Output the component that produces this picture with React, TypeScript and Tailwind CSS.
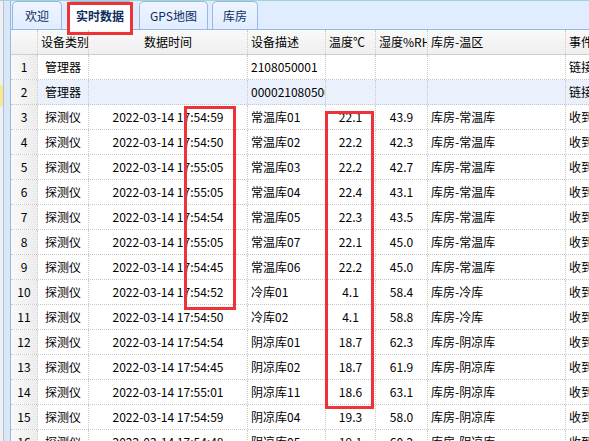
import React from "react";

type Row = {
  type: string;
  time: string;
  desc: string;
  temp: string;
  hum: string;
  area: string;
  ev: string;
};

const rows: Row[] = [
  { type: "管理器", time: "", desc: "2108050001", temp: "", hum: "", area: "", ev: "链接成功" },
  { type: "管理器", time: "", desc: "000021080500", temp: "", hum: "", area: "", ev: "链接成功" },
  { type: "探测仪", time: "2022-03-14 17:54:59", desc: "常温库01", temp: "22.1", hum: "43.9", area: "库房-常温库", ev: "收到数据" },
  { type: "探测仪", time: "2022-03-14 17:54:50", desc: "常温库02", temp: "22.2", hum: "42.3", area: "库房-常温库", ev: "收到数据" },
  { type: "探测仪", time: "2022-03-14 17:55:05", desc: "常温库03", temp: "22.2", hum: "42.7", area: "库房-常温库", ev: "收到数据" },
  { type: "探测仪", time: "2022-03-14 17:55:05", desc: "常温库04", temp: "22.4", hum: "43.1", area: "库房-常温库", ev: "收到数据" },
  { type: "探测仪", time: "2022-03-14 17:54:54", desc: "常温库05", temp: "22.3", hum: "43.5", area: "库房-常温库", ev: "收到数据" },
  { type: "探测仪", time: "2022-03-14 17:55:05", desc: "常温库07", temp: "22.1", hum: "45.0", area: "库房-常温库", ev: "收到数据" },
  { type: "探测仪", time: "2022-03-14 17:54:45", desc: "常温库06", temp: "22.2", hum: "45.0", area: "库房-常温库", ev: "收到数据" },
  { type: "探测仪", time: "2022-03-14 17:54:52", desc: "冷库01", temp: "4.1", hum: "58.4", area: "库房-冷库", ev: "收到数据" },
  { type: "探测仪", time: "2022-03-14 17:54:50", desc: "冷库02", temp: "4.1", hum: "58.8", area: "库房-冷库", ev: "收到数据" },
  { type: "探测仪", time: "2022-03-14 17:54:54", desc: "阴凉库01", temp: "18.7", hum: "62.3", area: "库房-阴凉库", ev: "收到数据" },
  { type: "探测仪", time: "2022-03-14 17:54:45", desc: "阴凉库02", temp: "18.7", hum: "61.9", area: "库房-阴凉库", ev: "收到数据" },
  { type: "探测仪", time: "2022-03-14 17:55:01", desc: "阴凉库11", temp: "18.6", hum: "63.1", area: "库房-阴凉库", ev: "收到数据" },
  { type: "探测仪", time: "2022-03-14 17:54:59", desc: "阴凉库04", temp: "19.3", hum: "58.0", area: "库房-阴凉库", ev: "收到数据" },
  { type: "探测仪", time: "2022-03-14 17:54:48", desc: "阴凉库05", temp: "19.1", hum: "60.2", area: "库房-阴凉库", ev: "收到数据" },
];

const cell =
  "h-full flex items-center overflow-hidden whitespace-nowrap border-r border-dotted border-[#c8c8c8] px-[3px]";

function Tab({ label, w, ml, active }: { label: string; w: string; ml: string; active?: boolean }) {
  return (
    <div
      className={
        "h-[28px] flex items-center justify-center rounded-t-[5px] border border-b-0 border-[#95b8e7] text-[#0e2d5f] " +
        w +
        " " +
        ml +
        (active
          ? " bg-white font-bold mb-[-1px] h-[29px]"
          : " bg-gradient-to-b from-[#eff5ff] to-[#e0ecff]")
      }
    >
      {label}
    </div>
  );
}

export default function App() {
  return (
    <div
      className="relative w-[589px] h-[441px] overflow-hidden bg-white text-[12px] text-black"
      style={{ fontFamily: '"Noto Sans CJK SC", "Noto Sans", sans-serif' }}
    >
      <div className="h-[1px] bg-[#a3d5cd]" />
      <div className="flex h-[440px]">
        {/* left strip */}
        <div className="w-[10px] flex h-full">
          <div className="w-[3px] h-full flex flex-col bg-[#f0f0f0]">
            <div className="h-[84px]" />
            <div className="h-[21px] bg-[#f8e98e]" />
          </div>
          <div className="w-[1px] h-full bg-[#a9c3e6]" />
          <div className="w-[6px] h-full bg-[#dce7f6]" />
        </div>
        {/* main */}
        <div className="flex-1 flex flex-col border-l border-[#95b8e7] min-w-0">
          <div className="h-[32px] bg-[#e0ecff] border-b border-[#95b8e7] flex items-end">
            <Tab label="欢迎" w="w-[50px]" ml="ml-[1px]" />
            <Tab label="实时数据" w="w-[66px]" ml="ml-[5px]" active />
            <Tab label="GPS地图" w="w-[69px]" ml="ml-[6px]" />
            <Tab label="库房" w="w-[46px]" ml="ml-[4px]" />
          </div>
          {/* grid header */}
          <div className="h-[25px] flex border-b border-[#cfcfcf] bg-gradient-to-b from-[#f9f9f9] to-[#efefef] shrink-0">
            <div className={cell + " w-[27px]"} />
            <div className={cell + " w-[51px]"}>设备类别</div>
            <div className={cell + " w-[159px] justify-center"}>数据时间</div>
            <div className={cell + " w-[78px]"}>设备描述</div>
            <div className={cell + " w-[50px]"}>温度℃</div>
            <div className={cell + " w-[52px]"}>湿度%RH</div>
            <div className={cell + " w-[138px]"}>库房-温区</div>
            <div className={cell + " flex-1 border-r-0"}>事件</div>
          </div>
          {/* rows */}
          <div className="flex flex-col">
            {rows.map((r, i) => (
              <div
                key={i}
                className={
                  "h-[25px] flex shrink-0 border-b border-dotted border-[#c8c8c8] " +
                  (i === 1 ? "bg-[#eaf1fd]" : "bg-white")
                }
              >
                <div className={cell + " w-[27px] justify-center bg-gradient-to-r from-[#f9f9f9] to-[#ececec]"}>
                  {i + 1}
                </div>
                <div className={cell + " w-[51px] justify-center"}>{r.type}</div>
                <div className={cell + " w-[159px] justify-center"}>{r.time}</div>
                <div className={cell + " w-[78px]"}>{r.desc}</div>
                <div className={cell + " w-[50px] justify-center"}>{r.temp}</div>
                <div className={cell + " w-[52px] justify-center"}>{r.hum}</div>
                <div className={cell + " w-[138px]"}>{r.area}</div>
                <div className={cell + " flex-1 border-r-0"}>{r.ev}</div>
              </div>
            ))}
          </div>
        </div>
      </div>
      {/* red annotation boxes */}
      <div className="absolute left-[67px] top-[2px] w-[66px] h-[33px] border-[3px] border-[#ee3338]" />
      <div className="absolute left-[184px] top-[106px] w-[52px] h-[204px] border-[3px] border-[#ee3338]" />
      <div className="absolute left-[325px] top-[111px] w-[49px] h-[298px] border-[3px] border-[#ee3338]" />
    </div>
  );
}
